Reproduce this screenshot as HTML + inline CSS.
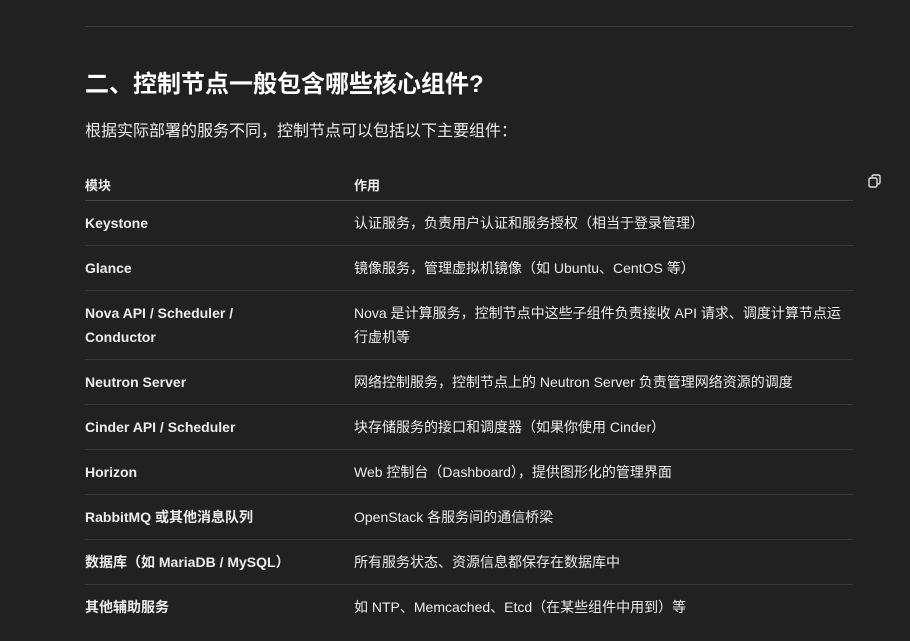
<!DOCTYPE html>
<html><head><meta charset="utf-8"><style>
html,body{margin:0;background:#212121;width:910px;height:641px;overflow:hidden}
body{font-family:"Liberation Sans","Noto Sans CJK SC",sans-serif;color:#ececec;position:relative}
.hr{position:absolute;left:85px;top:26px;width:768px;height:1px;background:#3a3a3a}
h2{position:absolute;left:85px;top:67px;margin:0;font-size:24px;font-weight:700;line-height:36px;color:#fff}
p{position:absolute;left:85px;top:120px;margin:0;font-size:16px;line-height:24px}
table{position:absolute;left:85px;top:169px;width:768px;border-collapse:collapse;font-size:14px}
th{text-align:left;font-size:13px;font-weight:700;height:31px;padding:0;border-bottom:1px solid #444;vertical-align:middle}
td{padding:10px 0;line-height:24px;border-bottom:1px solid #383838;vertical-align:top}
td:first-child{font-weight:700;width:269px;padding-right:0}
tr:last-child td{border-bottom:none}
.copy{position:absolute;left:867px;top:173px}
</style></head><body>
<div class="hr"></div>
<h2>二、控制节点一般包含哪些核心组件?</h2>
<p>根据实际部署的服务不同，控制节点可以包括以下主要组件：</p>
<svg class="copy" width="16" height="16" viewBox="0 0 16 16" fill="none" stroke="#ddd" stroke-width="1.4"><rect x="2" y="5" width="8" height="9" rx="1.5"/><path d="M5 5V3.5A1.5 1.5 0 0 1 6.5 2h5A1.5 1.5 0 0 1 13 3.5v6A1.5 1.5 0 0 1 11.5 11H10"/></svg>
<table>
<tr><th>模块</th><th>作用</th></tr>
<tr><td>Keystone</td><td>认证服务，负责用户认证和服务授权（相当于登录管理）</td></tr>
<tr><td>Glance</td><td>镜像服务，管理虚拟机镜像（如 Ubuntu、CentOS 等）</td></tr>
<tr><td>Nova API / Scheduler /<br>Conductor</td><td>Nova 是计算服务，控制节点中这些子组件负责接收 API 请求、调度计算节点运行虚机等</td></tr>
<tr><td>Neutron Server</td><td>网络控制服务，控制节点上的 Neutron Server 负责管理网络资源的调度</td></tr>
<tr><td>Cinder API / Scheduler</td><td>块存储服务的接口和调度器（如果你使用 Cinder）</td></tr>
<tr><td>Horizon</td><td>Web 控制台（Dashboard），提供图形化的管理界面</td></tr>
<tr><td>RabbitMQ 或其他消息队列</td><td>OpenStack 各服务间的通信桥梁</td></tr>
<tr><td>数据库（如 MariaDB / MySQL）</td><td>所有服务状态、资源信息都保存在数据库中</td></tr>
<tr><td>其他辅助服务</td><td>如 NTP、Memcached、Etcd（在某些组件中用到）等</td></tr>
</table>
</body></html>
